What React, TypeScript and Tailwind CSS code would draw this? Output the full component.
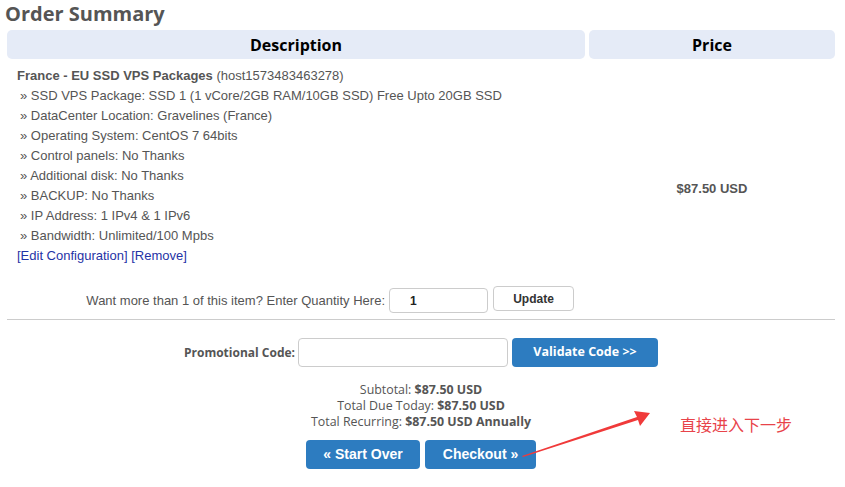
import React from 'react'

const LINES = [
  'SSD VPS Package: SSD 1 (1 vCore/2GB RAM/10GB SSD) Free Upto 20GB SSD',
  'DataCenter Location: Gravelines (France)',
  'Operating System: CentOS 7 64bits',
  'Control panels: No Thanks',
  'Additional disk: No Thanks',
  'BACKUP: No Thanks',
  'IP Address: 1 IPv4 & 1 IPv6',
  'Bandwidth: Unlimited/100 Mpbs',
]

export default function App() {
  return (
    <div className="relative w-[845px] h-[487px] overflow-hidden bg-white font-['Liberation_Sans',Arial,sans-serif]">
      {/* Title */}
      <h2 className="pl-[5px] text-[20px] leading-[28px] font-bold text-[#555] font-['Open_Sans',sans-serif]">
        Order Summary
      </h2>

      <div className="ml-[7px] w-[828px] mt-[2px]">
        {/* Table header */}
        <div className="flex gap-[4px]">
          <div className="w-[578px] h-[29px] bg-[#e5ebf7] rounded-[5px] flex items-center justify-center font-['Open_Sans',sans-serif] font-bold text-[16px] text-black">
            Description
          </div>
          <div className="flex-1 h-[29px] bg-[#e5ebf7] rounded-[5px] flex items-center justify-center font-['Open_Sans',sans-serif] font-bold text-[16px] text-black">
            Price
          </div>
        </div>

        {/* Item row */}
        <div className="flex gap-[4px]">
          <div className="w-[578px] pt-[7px] pb-[6px] text-[13px] leading-[20px] text-[#555]">
            <div className="pl-[10px]">
              <div>
                <span className="font-bold">France - EU SSD VPS Packages</span> (host1573483463278)
              </div>
              {LINES.map(l => (
                <div key={l} className="pl-[3px]">» {l}</div>
              ))}
              <div className="text-[#1f33a6]">
                <span>[Edit Configuration]</span> <span>[Remove]</span>
              </div>
            </div>
            <div className="mt-[22px] flex items-center justify-end pr-[11px] text-[13px] text-[#555]">
              <span className="mr-[4px]">Want more than 1 of this item? Enter Quantity Here:</span>
              <div className="w-[99px] h-[25px] border border-[#ccc] rounded-[4px] flex items-center pl-[20px] font-bold text-[12px] text-[#222]">
                1
              </div>
              <div className="ml-[5px] w-[81px] h-[25px] -mt-[4px] border border-[#ccc] rounded-[4px] flex items-center justify-center text-[12px] font-semibold text-[#333]">
                Update
              </div>
            </div>
          </div>
          <div className="flex-1 flex items-center justify-center font-bold text-[13px] text-[#555]">
            $87.50 USD
          </div>
        </div>

        <div className="border-t border-[#ccc]" />

        {/* Promo */}
        <div className="mt-[18px] flex items-center justify-center">
          <span className="font-['Open_Sans',sans-serif] font-bold text-[12px] text-[#555] mr-[3px]">Promotional Code:</span>
          <div className="w-[210px] h-[29px] border border-[#ccc] rounded-[4px]" />
          <div className="ml-[4px] w-[146px] h-[29px] bg-[#2d7cc0] rounded-[4px] flex items-center justify-center font-['Open_Sans',sans-serif] font-bold text-[12.5px] text-white">
            Validate Code &gt;&gt;
          </div>
        </div>

        {/* Totals */}
        <div className="mt-[15px] flex flex-col items-center font-['Open_Sans',sans-serif] text-[12.4px] leading-[16px] text-[#555]">
          <div>Subtotal: <span className="font-bold">$87.50 USD</span></div>
          <div>Total Due Today: <span className="font-bold">$87.50 USD</span></div>
          <div>Total Recurring: <span className="font-bold">$87.50 USD Annually</span></div>
        </div>

        {/* Buttons */}
        <div className="mt-[10px] flex justify-center gap-[5px]">
          <div className="w-[114px] h-[29px] bg-[#2d7cc0] rounded-[4px] flex items-center justify-center font-bold text-[14px] text-white">
            « Start Over
          </div>
          <div className="w-[111px] h-[29px] bg-[#2d7cc0] rounded-[4px] flex items-center justify-center font-bold text-[14px] text-white">
            Checkout »
          </div>
        </div>
      </div>

      {/* Annotation arrow */}
      <svg className="absolute left-0 top-0 pointer-events-none" width="845" height="487">
        <polygon points="522,456 637,417 634,411 650,413 640,426 638,420 523,457" fill="#f03a3a" />
      </svg>
      <div className="absolute left-[680px] top-[414px] text-[16px] leading-[20px] text-[#e8434a] font-['Noto_Sans_CJK_SC',sans-serif]">
        直接进入下一步
      </div>
    </div>
  )
}
